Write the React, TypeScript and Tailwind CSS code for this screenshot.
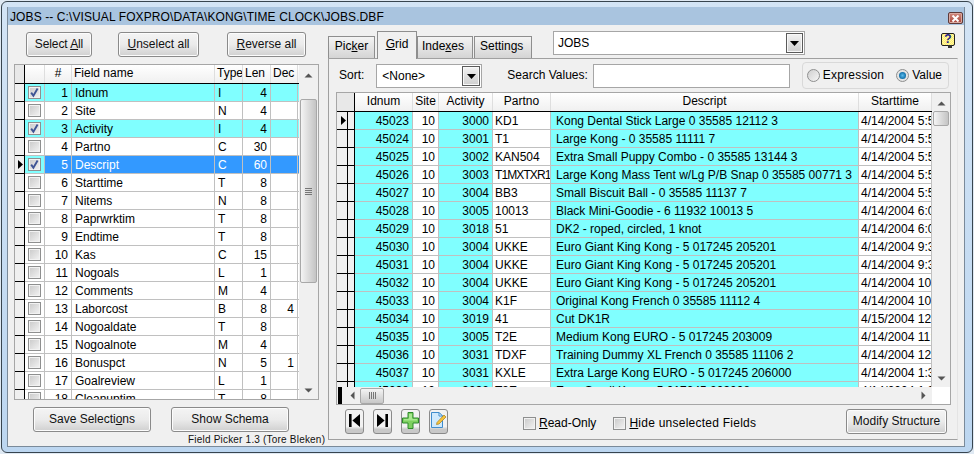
import React from "react";

const fields: [number, string, string, number, string, boolean][] = [
  [1, "Idnum", "I", 4, "", true],
  [2, "Site", "N", 4, "", false],
  [3, "Activity", "I", 4, "", true],
  [4, "Partno", "C", 30, "", false],
  [5, "Descript", "C", 60, "", true],
  [6, "Starttime", "T", 8, "", false],
  [7, "Nitems", "N", 8, "", false],
  [8, "Paprwrktim", "T", 8, "", false],
  [9, "Endtime", "T", 8, "", false],
  [10, "Kas", "C", 15, "", false],
  [11, "Nogoals", "L", 1, "", false],
  [12, "Comments", "M", 4, "", false],
  [13, "Laborcost", "B", 8, "4", false],
  [14, "Nogoaldate", "T", 8, "", false],
  [15, "Nogoalnote", "M", 4, "", false],
  [16, "Bonuspct", "N", 5, "1", false],
  [17, "Goalreview", "L", 1, "", false],
  [18, "Cleanuptim", "T", 8, "", false],
];

const jobs: [number, number, number, string, string, string][] = [
  [45023, 10, 3000, "KD1", "Kong Dental Stick Large 0 35585 12112 3", "4/14/2004 5:55:00 AM"],
  [45024, 10, 3001, "T1", "Large Kong - 0 35585 11111 7", "4/14/2004 5:55:00 AM"],
  [45025, 10, 3002, "KAN504", "Extra Small Puppy Combo - 0 35585 13144 3", "4/14/2004 5:55:00 AM"],
  [45026, 10, 3003, "T1MXTXR1", "Large Kong Mass Tent w/Lg P/B Snap 0 35585 00771 3", "4/14/2004 5:55:00 AM"],
  [45027, 10, 3004, "BB3", "Small Biscuit Ball - 0 35585 11137 7", "4/14/2004 5:55:00 AM"],
  [45028, 10, 3005, "10013", "Black Mini-Goodie - 6 11932 10013 5", "4/14/2004 6:00:00 AM"],
  [45029, 10, 3018, "51", "DK2 - roped, circled, 1 knot", "4/14/2004 6:00:00 AM"],
  [45030, 10, 3004, "UKKE", "Euro Giant King Kong - 5 017245 205201", "4/14/2004 9:30:00 AM"],
  [45031, 10, 3004, "UKKE", "Euro Giant King Kong - 5 017245 205201", "4/14/2004 9:30:00 AM"],
  [45032, 10, 3004, "UKKE", "Euro Giant King Kong - 5 017245 205201", "4/14/2004 10:00:00 AM"],
  [45033, 10, 3004, "K1F", "Original Kong French 0 35585 11112 4", "4/14/2004 10:00:00 AM"],
  [45034, 10, 3019, "41", "Cut DK1R", "4/15/2004 12:00:00 PM"],
  [45035, 10, 3005, "T2E", "Medium Kong EURO - 5 017245 203009", "4/14/2004 11:00:00 AM"],
  [45036, 10, 3031, "TDXF", "Training Dummy XL French 0 35585 11106 2", "4/14/2004 12:00:00 PM"],
  [45037, 10, 3031, "KXLE", "Extra Large Kong EURO - 5 017245 206000", "4/14/2004 1:30:00 PM"],
  [45038, 10, 3032, "T3E", "Euro Small Kong - 5 017245 203008", "4/14/2004 1:30:00 PM"],
];

const Btn = ({ w, ml = "", children }: { w: string; ml?: string; children: React.ReactNode }) => (
  <div
    className={`${w} ${ml} h-[25px] shrink-0 flex items-center justify-center rounded-[3px] border border-[#8a8a8a] bg-gradient-to-b from-[#f4f4f4] via-[#ebebeb] to-[#d0d0d0] text-[#111] shadow-[inset_0_0_0_1px_#fcfcfc]`}
  >
    {children}
  </div>
);

const Check = ({ on }: { on?: boolean }) => (
  <div className="w-[13px] h-[13px] border border-[#8e8f8f] bg-gradient-to-br from-[#c9c9c9] to-[#f4f4f4] shadow-[inset_0_0_0_1px_#f2f2f2] flex items-center justify-center">
    {on && (
      <svg width="11" height="11" viewBox="0 0 11 11">
        <path d="M2.2 5.6 L4.4 8.8 L8.6 1.6" fill="none" stroke="#3f5595" strokeWidth="1.9" />
      </svg>
    )}
  </div>
);

const ArrowUp = () => (
  <svg width="9" height="5" viewBox="0 0 9 5">
    <path d="M0.5 4.5 L4.5 0.5 L8.5 4.5 Z" fill="#555" />
  </svg>
);
const ArrowDown = () => (
  <svg width="9" height="5" viewBox="0 0 9 5">
    <path d="M0.5 0.5 L4.5 4.5 L8.5 0.5 Z" fill="#555" />
  </svg>
);
const ArrowLeft = () => (
  <svg width="5" height="9" viewBox="0 0 5 9">
    <path d="M4.5 0.5 L0.5 4.5 L4.5 8.5 Z" fill="#555" />
  </svg>
);
const ArrowRight = () => (
  <svg width="5" height="9" viewBox="0 0 5 9">
    <path d="M0.5 0.5 L4.5 4.5 L0.5 8.5 Z" fill="#555" />
  </svg>
);
const Pointer = () => (
  <svg width="5" height="9" viewBox="0 0 5 9" className="shrink-0">
    <path d="M0 0 L5 4.5 L0 9 Z" fill="#000" />
  </svg>
);

const ComboArrow = ({ cls }: { cls: string }) => (
  <div className={`${cls} shrink-0 flex items-center justify-center border border-[#5a5a5a] bg-gradient-to-b from-[#f2f2f2] to-[#cfcfcf] shadow-[inset_0_0_0_1px_#f8f8f8]`}>
    <svg width="9" height="5" viewBox="0 0 9 5">
      <path d="M0 0 L9 0 L4.5 5 Z" fill="#000" />
    </svg>
  </div>
);

const Head = ({ w, children, left }: { w: string; children?: React.ReactNode; left?: boolean }) => (
  <div className={`${w} shrink-0 h-full border-r border-[#dedede] ${left ? "pl-[2px]" : "text-center"} whitespace-nowrap overflow-hidden`}>
    {children}
  </div>
);

const Cell = ({ w, bg = "", right, pl = "pl-[3px]", children }: { w: string; bg?: string; right?: boolean; pl?: string; children?: React.ReactNode }) => (
  <div className={`${w} ${bg} shrink-0 h-full pt-px border-r border-[#c0c0c0] whitespace-nowrap overflow-hidden ${right ? "text-right pr-[3px]" : pl}`}>
    {children}
  </div>
);

function ToolBtn({ ml, children }: { ml: string; children: React.ReactNode }) {
  return (
    <div className={`${ml} w-[19px] h-[25px] shrink-0 flex items-center justify-center pb-[3px] rounded-[3px] border border-[#8a8a8a] bg-gradient-to-b from-[#f2f2f2] from-[72%] to-[#c8c8c8] to-[84%]`}>
      {children}
    </div>
  );
}

export default function App() {
  return (
    <div className="w-[974px] h-[454px] overflow-hidden bg-[#dfe9f3] pt-px px-px font-['Liberation_Sans',Arial,sans-serif] text-[12px] leading-[17px] text-black">
      <div className="w-[972px] h-[452px] rounded-[6px] border border-[#38454f] bg-gradient-to-b from-[#d3e4f5] to-[#bcd6f0] pt-[5px] pb-[5px] pl-[5px] pr-[7px]">
        <div className="w-[958px] h-[440px] border border-[#7a8a9a] bg-[#f0f0f0] flex flex-col">
          {/* title bar */}
          <div className="h-[18px] shrink-0 bg-[#a9c4df] flex items-center pl-[2px] pr-[1px] -mt-px">
            <span className="whitespace-nowrap mt-[2px] tracking-[0.1px]">JOBS -- C:\VISUAL FOXPRO\DATA\KONG\TIME CLOCK\JOBS.DBF</span>
            <div className="ml-auto mt-[4px] w-[15px] h-[12px] rounded-[2px] border border-[#5e3a3a] bg-gradient-to-b from-[#d08a80] to-[#a8443a] shadow-[inset_0_0_0_1px_#d9a9a0] flex items-center justify-center">
              <svg width="9" height="7" viewBox="0 0 9 7">
                <path d="M1.5 0.5 L7.5 6.5 M7.5 0.5 L1.5 6.5" stroke="#fff" strokeWidth="2" />
              </svg>
            </div>
          </div>

          <div className="flex flex-1 min-h-0">
            {/* left panel */}
            <div className="w-[320px] shrink-0 flex flex-col pt-[7px]">
              <div className="flex">
                <Btn w="w-[66px]" ml="ml-[18px]">
                  <span className="tracking-[-0.1px]">Select <u>A</u>ll</span>
                </Btn>
                <Btn w="w-[81px]" ml="ml-[26px]">
                  <span><u>U</u>nselect all</span>
                </Btn>
                <Btn w="w-[79px]" ml="ml-[28px]">
                  <span><u>R</u>everse all</span>
                </Btn>
              </div>

              <div className="ml-[6px] mt-[7px] w-[305px] h-[336px] shrink-0 border border-[#a6a6a6] flex bg-white">
                <div className="w-[284px] shrink-0 overflow-hidden">
                  <div className="h-[19px] flex border-b border-black bg-gradient-to-b from-white to-[#f0f0f0]">
                    <div className="w-[10px] shrink-0 h-full bg-[#e8e8e8] border-r border-black" />
                    <Head w="w-[20px]" />
                    <Head w="w-[27px]">#</Head>
                    <Head w="w-[143px]" left>Field name</Head>
                    <Head w="w-[28px]" left>Type</Head>
                    <Head w="w-[28px]" left>Len</Head>
                    <Head w="w-[27px]" left>Dec</Head>
                  </div>
                  {fields.map(([n, name, type, len, dec, on]) => {
                    const sel = n === 5;
                    const rowBg = sel ? "bg-[#3399ff] text-white" : on ? "bg-[#80ffff]" : "bg-white";
                    return (
                      <div key={n} className="h-[18px] flex">
                        <div className="w-[10px] shrink-0 h-full bg-[#f0f0f0] border-r border-b border-black flex items-center justify-end pr-px">
                          {sel && <Pointer />}
                        </div>
                        <div className={`w-[20px] shrink-0 h-full flex items-center justify-center border-r border-b border-[#c0c0c0] ${on ? "bg-[#80ffff]" : "bg-white"}`}>
                          <Check on={on} />
                        </div>
                        <div className={`flex flex-1 h-full border-b border-[#c0c0c0] ${rowBg}`}>
                          <Cell w="w-[27px]" right>{n}</Cell>
                          <Cell w="w-[143px]">{name}</Cell>
                          <Cell w="w-[28px]">{type}</Cell>
                          <Cell w="w-[28px]" right>{len}</Cell>
                          <Cell w="w-[27px]" right>{dec}</Cell>
                        </div>
                      </div>
                    );
                  })}
                </div>
                <div className="flex-1 bg-[#f0f0f0] flex flex-col items-center px-px">
                  <div className="h-[17px] shrink-0 flex items-center justify-center pt-[3px]">
                    <ArrowUp />
                  </div>
                  <div className="mt-[17px] h-[184px] w-full shrink-0 rounded-[2px] border border-[#a8a8a8] bg-gradient-to-r from-[#f4f4f4] to-[#c4c4c4] flex flex-col items-center justify-center gap-[1px]">
                    <div className="w-[7px] h-px bg-[#777]" />
                    <div className="w-[7px] h-px bg-[#777]" />
                    <div className="w-[7px] h-px bg-[#777]" />
                    <div className="w-[7px] h-px bg-[#777]" />
                  </div>
                  <div className="mt-auto mb-[6px]">
                    <ArrowDown />
                  </div>
                </div>
              </div>

              <div className="flex mt-[7px]">
                <Btn w="w-[118px]" ml="ml-[25px]">
                  <span>Save Selecti<u>o</u>ns</span>
                </Btn>
                <Btn w="w-[118px]" ml="ml-[20px]">
                  <span>Show Schema</span>
                </Btn>
              </div>
              <div className="ml-[180px] mt-[2px] text-[10px] leading-[12px] tracking-[0.2px] whitespace-nowrap text-[#111]">
                Field Picker 1.3 (Tore Bleken)
              </div>
            </div>

            {/* right panel */}
            <div className="flex-1 min-w-0 flex flex-col pt-[6px]">
              <div className="h-[27px] shrink-0 flex items-end relative z-10">
                <div className="w-[47px] h-[22px] mr-[2px] border border-b-0 border-[#8e8e8e] bg-gradient-to-b from-[#f4f4f4] to-[#d4d4d4] text-center pt-px">
                  Pic<u>k</u>er
                </div>
                <div className="w-[40px] h-[28px] -mb-px border border-b-0 border-[#8e8e8e] bg-[#f0f0f0] text-center pt-[4px]">
                  <u>G</u>rid
                </div>
                <div className="w-[56px] h-[22px] border border-b-0 border-[#8e8e8e] bg-gradient-to-b from-[#f4f4f4] to-[#d4d4d4] pl-[4px] pt-px">
                  Inde<u>x</u>es
                </div>
                <div className="w-[58px] h-[22px] ml-px border border-b-0 border-[#8e8e8e] bg-gradient-to-b from-[#f4f4f4] to-[#d4d4d4] pl-[5px] pt-px">
                  Settings
                </div>
                <div className="self-start ml-[21px] w-[252px] h-[24px] border border-[#a6a6a6] bg-white flex items-center pl-[4px] pr-px">
                  <span>JOBS</span>
                  <ComboArrow cls="ml-auto w-[17px] h-[20px]" />
                </div>
                <div className="self-start ml-auto mr-[9px] mt-[2px] relative w-[14px] h-[13px] rounded-[2px] border border-[#222] bg-[repeating-conic-gradient(#fff06a_0_25%,#fff6a8_0_50%)] bg-[length:2px_2px] flex items-center justify-center font-bold text-[12px] leading-[11px] text-[#1c1c8c]">
                  ?
                  <div className="absolute left-[6px] top-[11px] w-[4px] h-[3px] bg-[#333]" />
                </div>
              </div>

              <div className="w-[630px] h-[382px] shrink-0 border border-[#a0a0a0] border-r-[#e4e4e4] flex flex-col">
                <div className="flex items-start pt-[5px] h-[33px] shrink-0">
                  <span className="ml-[10px] mt-[3px]">Sort:</span>
                  <div className="ml-[12px] w-[106px] h-[24px] border border-[#a6a6a6] bg-white flex items-center pl-[5px] pr-px">
                    <span>&lt;None&gt;</span>
                    <ComboArrow cls="ml-auto w-[18px] h-[20px]" />
                  </div>
                  <span className="ml-[25px] mt-[3px] whitespace-nowrap">Search Values:</span>
                  <div className="ml-[5px] w-[197px] h-[24px] border border-[#a6a6a6] bg-white" />
                  <div className="ml-[12px] -mt-[2px] w-[147px] h-[27px] rounded-[4px] border border-[#d9d9d9] flex items-center pl-[4px]">
                    <div className="w-[13px] h-[13px] rounded-full border border-[#8e8f8f] bg-gradient-to-br from-[#cfcfcf] to-[#f6f6f6]" />
                    <span className="ml-[3px] tracking-[0.2px]">Expression</span>
                    <div className="ml-[12px] w-[13px] h-[13px] rounded-full border border-[#8e8f8f] bg-[#e4e4e4] flex items-center justify-center">
                      <div className="w-[7px] h-[7px] rounded-full bg-[radial-gradient(circle,#5cbcec_0%,#0f6ea8_70%,#0a4f7e_100%)]" />
                    </div>
                    <span className="ml-[3px]">Value</span>
                  </div>
                </div>

                <div className="ml-[7px] w-[615px] h-[313px] shrink-0 border border-[#a6a6a6] flex bg-white">
                  <div className="w-[595px] shrink-0 flex flex-col">
                    <div className="h-[294px] shrink-0 overflow-hidden">
                      <div className="h-[19px] flex border-b border-black bg-gradient-to-b from-white to-[#f0f0f0]">
                        <div className="w-[18px] shrink-0 h-full bg-[#e8e8e8] border-r border-black" />
                        <Head w="w-[58px]">Idnum</Head>
                        <Head w="w-[26px]">Site</Head>
                        <Head w="w-[54px]">Activity</Head>
                        <Head w="w-[58px]">Partno</Head>
                        <Head w="w-[308px]">Descript</Head>
                        <Head w="w-[73px]">Starttime</Head>
                      </div>
                      {jobs.map(([id, site, act, part, desc, start], i) => (
                        <div key={id} className="h-[18px] flex">
                          <div className="w-[11px] shrink-0 h-full bg-[#f0f0f0] border-r border-b border-black flex items-center justify-end pr-px">
                            {i === 0 && <Pointer />}
                          </div>
                          <div className="w-[7px] shrink-0 h-full bg-[#f0f0f0] border-r border-b border-black" />
                          <div className="flex flex-1 h-full border-b border-[#c0c0c0] bg-white">
                            <Cell w="w-[58px]" bg="bg-[#80ffff]" right>{id}</Cell>
                            <Cell w="w-[26px]" right>{site}</Cell>
                            <Cell w="w-[54px]" bg="bg-[#80ffff]" right>{act}</Cell>
                            <Cell w="w-[58px]" pl={part.length > 6 ? "pl-[2px] tracking-[-0.9px]" : "pl-[2px]"}>{part}</Cell>
                            <Cell w="w-[308px]" bg="bg-[#80ffff]" pl="pl-[5px]">{desc}</Cell>
                            <Cell w="w-[73px]" pl="pl-[2px]">{start}</Cell>
                          </div>
                        </div>
                      ))}
                    </div>
                    <div className="h-[17px] shrink-0 bg-[#f0f0f0] flex items-center">
                      <div className="ml-px w-[4px] h-full bg-black shrink-0" />
                      <div className="ml-[8px]">
                        <ArrowLeft />
                      </div>
                      <div className="ml-[5px] w-[24px] h-[16px] rounded-[2px] border border-[#a8a8a8] bg-gradient-to-b from-[#f4f4f4] to-[#c8c8c8] flex items-center justify-center gap-[1px]">
                        <div className="w-px h-[7px] bg-[#777]" />
                        <div className="w-px h-[7px] bg-[#777]" />
                        <div className="w-px h-[7px] bg-[#777]" />
                        <div className="w-px h-[7px] bg-[#777]" />
                      </div>
                      <div className="ml-auto mr-[6px]">
                        <ArrowRight />
                      </div>
                    </div>
                  </div>
                  <div className="flex-1 flex flex-col">
                    <div className="h-[294px] shrink-0 bg-[#f0f0f0] flex flex-col items-center px-px">
                      <div className="h-[17px] shrink-0 flex items-center justify-center pt-[3px]">
                        <ArrowUp />
                      </div>
                      <div className="mt-px h-[15px] w-full shrink-0 rounded-[2px] border border-[#a8a8a8] bg-gradient-to-r from-[#f4f4f4] to-[#c4c4c4]" />
                      <div className="mt-auto mb-[6px]">
                        <ArrowDown />
                      </div>
                    </div>
                    <div className="flex-1 bg-white" />
                  </div>
                </div>

                <div className="flex items-start mt-[4px]">
                  <ToolBtn ml="ml-[16px]">
                    <svg width="13" height="15" viewBox="0 0 13 15">
                      <path d="M1 1 H3.6 V14 H1 Z M12 1 V14 L4.4 7.5 Z" fill="#000" />
                    </svg>
                  </ToolBtn>
                  <ToolBtn ml="ml-[9px]">
                    <svg width="13" height="15" viewBox="0 0 13 15">
                      <path d="M1 1 L8.6 7.5 L1 14 Z M9.4 1 H12 V14 H9.4 Z" fill="#000" />
                    </svg>
                  </ToolBtn>
                  <ToolBtn ml="ml-[9px]">
                    <svg width="17" height="17" viewBox="0 0 17 17">
                      <path d="M6 0.5 H11 V6 H16.5 V11 H11 V16.5 H6 V11 H0.5 V6 H6 Z" fill="#7ed060" stroke="#2c8a2a" />
                      <path d="M7 2 H10 V7 H15 V8.5 H2 V7 H7 Z" fill="#a8e890" />
                    </svg>
                  </ToolBtn>
                  <ToolBtn ml="ml-[9px]">
                    <svg width="17" height="18" viewBox="0 0 17 18">
                      <path d="M1.5 1.5 H9 L12.5 5 V16.5 H1.5 Z" fill="#cfe9fc" stroke="#3f8ccc" />
                      <path d="M9 1.5 V5 H12.5 Z" fill="#fff" stroke="#3f8ccc" />
                      <path d="M7 11.5 L14 4 L16 6 L9 13 L6.5 13.5 Z" fill="#f5c23c" stroke="#a87f1e" strokeWidth="0.7" />
                    </svg>
                  </ToolBtn>
                  <div className="ml-[75px] mt-[6px] flex items-center">
                    <Check />
                    <span className="ml-[3px] whitespace-nowrap"><u>R</u>ead-Only</span>
                  </div>
                  <div className="ml-[17px] mt-[6px] flex items-center">
                    <Check />
                    <span className="ml-[3px] whitespace-nowrap tracking-[0.25px]"><u>H</u>ide unselected Fields</span>
                  </div>
                  <Btn w="w-[101px]" ml="ml-auto mr-[10px]">
                    <span>Modify Structure</span>
                  </Btn>
                </div>
              </div>
            </div>
          </div>
        </div>
      </div>
    </div>
  );
}
